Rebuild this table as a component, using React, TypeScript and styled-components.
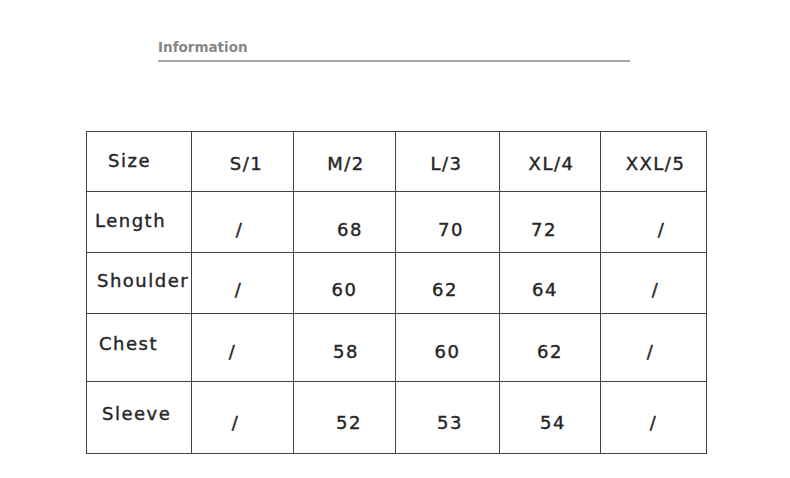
import styled, { createGlobalStyle } from "styled-components";

const GlobalStyle = createGlobalStyle`
  body {
    margin: 0;
    background: #ffffff;
  }
`;

const Page = styled.div`
  width: 790px;
  height: 478px;
  box-sizing: border-box;
  padding-top: 38px;
  font-family: "DejaVu Sans", "Liberation Sans", sans-serif;
  color: #262626;
  overflow: hidden;
`;

const Heading = styled.div`
  width: 472px;
  margin-left: 158px;
  padding-bottom: 4px;
  border-bottom: 2px solid #a6a6a6;
  font-size: 13.5px;
  line-height: 18px;
  font-weight: bold;
  color: #878787;
`;

const Table = styled.div`
  display: grid;
  width: max-content;
  margin: 69px 0 0 86px;
  grid-template-columns: 104px 101px 101px 103px 100px 105px;
  grid-template-rows: 59px 60px 60px 67px 71px;
  gap: 1px;
  padding: 1px;
  background: #444444;
`;

// shift the text off the cell centre by dx/dy, the way the source image has it
const pad = (dx: number, dy: number) =>
  `${Math.max(0, dy * 2)}px ${Math.max(0, -dx * 2)}px ${Math.max(0, -dy * 2)}px ${Math.max(0, dx * 2)}px`;

const Cell = styled.div<{ $dx: number; $dy: number }>`
  display: flex;
  align-items: center;
  justify-content: center;
  box-sizing: border-box;
  background: #ffffff;
  font-size: 18px;
  letter-spacing: 1.5px;
  white-space: nowrap;
  -webkit-text-stroke: 0.4px #262626;
  padding: ${(p) => pad(p.$dx, p.$dy)};
`;

const LabelCell = styled(Cell)<{ $left: number }>`
  justify-content: flex-start;
  padding-left: ${(p) => p.$left}px;
`;

type Row = {
  label: string;
  left: number;
  labelDy: number;
  dy: number;
  values: [string, number][];
};

const rows: Row[] = [
  {
    label: "Size",
    left: 21,
    labelDy: -1,
    dy: 2,
    values: [["S/1", 4], ["M/2", 1.5], ["L/3", -1], ["XL/4", 1.5], ["XXL/5", 2]],
  },
  {
    label: "Length",
    left: 8,
    labelDy: -1.5,
    dy: 7.5,
    values: [["/", -3], ["68", 5.5], ["70", 3.5], ["72", -6], ["/", 8]],
  },
  {
    label: "Shoulder",
    left: 10,
    labelDy: -2.5,
    dy: 6.5,
    values: [["/", -4], ["60", 0], ["62", -2.5], ["64", -5], ["/", 2]],
  },
  {
    label: "Chest",
    left: 12,
    labelDy: -4,
    dy: 4,
    values: [["/", -10], ["58", 1.5], ["60", 0], ["62", 0], ["/", -3]],
  },
  {
    label: "Sleeve",
    left: 15,
    labelDy: -4,
    dy: 5,
    values: [["/", -7], ["52", 4.5], ["53", 2.5], ["54", 3], ["/", 0]],
  },
];

export default function App() {
  return (
    <>
      <GlobalStyle />
      <Page>
        <Heading>Information</Heading>
        <Table>
          {rows.map((row) => [
            <LabelCell key={row.label} $left={row.left} $dx={0} $dy={row.labelDy}>
              {row.label}
            </LabelCell>,
            ...row.values.map(([text, dx], i) => (
              <Cell key={row.label + i} $dx={dx} $dy={row.dy}>
                {text}
              </Cell>
            )),
          ])}
        </Table>
      </Page>
    </>
  );
}
